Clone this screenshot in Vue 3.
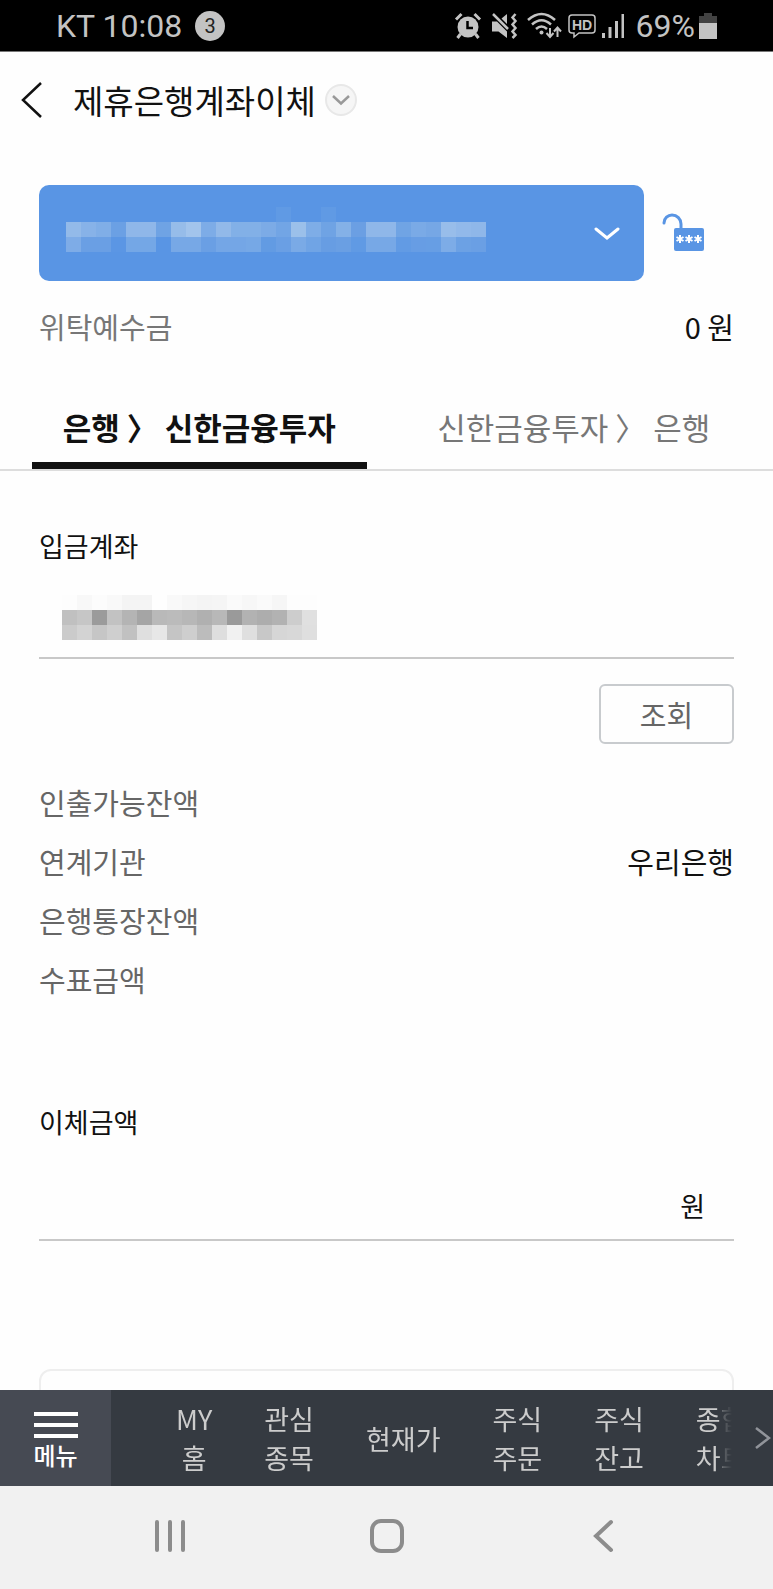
<template>
<div class="screen">
  <div class="status">
    <span class="status-text">KT 10:08</span>
    <span class="badge">3</span>
    <div class="status-icons">
      <svg width="28" height="28" viewBox="0 0 28 28" fill="none" stroke="#c3c3c3">
        <circle cx="14" cy="15" r="10.5" fill="#c3c3c3" stroke="none" />
        <path d="M2 7.500L7.500 2M26 7.500L20.500 2" stroke-width="3" />
        <path d="M6.500 22L3.500 26M21.500 22L24.500 26" stroke-width="3" />
        <path d="M13.500 9V16H19" stroke="#000" stroke-width="2.500" />
      </svg>
      <svg class="mute" width="27" height="28" viewBox="0 0 27 28">
        <path d="M1 9.500H6L16 19.500V26L7.500 19.500H1ZM16 2V12L10.500 6.500Z" fill="#c3c3c3" />
        <path d="M2 2L17 17" stroke="#c3c3c3" stroke-width="2.500" />
        <path d="M24.500 2L21.500 5.500L24.500 9L21.500 12.500L24.500 16L21.500 19.500L24.500 23L21.500 26" fill="none" stroke="#c3c3c3" stroke-width="2.500" />
      </svg>
      <svg class="wifi" width="35" height="28" viewBox="0 0 35 28" fill="none" stroke="#c3c3c3" stroke-width="2.500">
        <path d="M1 8Q14.500 -4 28 8M5 12.500Q14.500 4 24 12.500M9 17Q14.500 12 20 17" />
        <circle cx="14.500" cy="20.500" r="2" fill="#c3c3c3" stroke="none" />
        <path d="M23 16V24M19.500 21L23 25L26.500 21M30.500 25V16M27 19.500L30.500 15.500L34 19.500" stroke-width="2" />
      </svg>
      <svg class="hd" width="28" height="28" viewBox="0 0 28 28">
        <path d="M4 3H24Q27 3 27 6V18Q27 21 24 21H11L6 25V21H4Q1 21 1 18V6Q1 3 4 3Z" fill="none" stroke="#c3c3c3" stroke-width="1.500" />
        <text x="14" y="17.500" text-anchor="middle" fill="#c3c3c3">HD</text>
      </svg>
      <svg class="signal" width="23" height="28" viewBox="0 0 23 28" fill="#c3c3c3">
        <path d="M0 21H3V26H0ZM6.500 15H9.500V26H6.500ZM13 9H16V26H13ZM19.500 2H22V26H19.500Z" />
      </svg>
      <span class="status-text">69%</span>
      <svg class="battery" width="18" height="28" viewBox="0 0 18 28">
        <path d="M5 1H13V4H18V12H0V4H5Z" fill="#424242" />
        <path d="M0 11H18V27H0Z" fill="#c3c3c3" />
      </svg>
    </div>
  </div>

  <header class="header">
    <button class="back" aria-label="뒤로">
      <svg width="22" height="38" viewBox="0 0 22 38" fill="none" stroke="#111" stroke-width="2.500">
        <path d="M20 2L2 19L20 36" />
      </svg>
    </button>
    <h1>제휴은행계좌이체</h1>
    <button class="more" aria-label="메뉴 선택">
      <svg width="18" height="12" viewBox="0 0 18 12" fill="none" stroke="#999" stroke-width="2.500">
        <path d="M1 2L9 9.500L17 2" />
      </svg>
    </button>
  </header>

  <main class="content">
    <div class="account-row">
      <button class="account" aria-label="계좌 선택">
        <span class="mosaic mosaic-account">
          <i v-for="(c, i) in accountCells" :key="i" :style="{ background: c }"></i>
        </span>
        <svg width="26" height="16" viewBox="0 0 26 16" fill="none" stroke="#fff" stroke-width="3" stroke-linecap="round">
          <path d="M2 4L13 13L24 4" />
        </svg>
      </button>
      <button class="lock" aria-label="비밀번호">
        <svg width="42" height="38" viewBox="0 0 42 38">
          <path d="M2 10C2 5 6 2 10 2C15 2 19 6 19 11V17" fill="none" stroke="#5995e4" stroke-width="3" stroke-linecap="round" />
          <rect x="12" y="15" width="30" height="23" rx="2" fill="#5995e4" />
          <path v-for="x in [18, 27, 36]" :key="x" :d="star(x)" stroke="#fff" stroke-width="2" />
        </svg>
      </button>
    </div>

    <div class="row deposit">
      <span>위탁예수금</span>
      <b>0 원</b>
    </div>

    <div class="tabs" role="tablist">
      <button
        v-for="(t, i) in tabs"
        :key="t"
        role="tab"
        :aria-selected="tab === i"
        :class="{ active: tab === i }"
        @click="tab = i"
      >{{ t }}</button>
    </div>

    <section class="form">
      <label class="label" for="in-account">입금계좌</label>
      <button id="in-account" class="field">
        <span class="mosaic mosaic-field">
          <i v-for="(c, i) in fieldCells" :key="i" :style="{ background: c }"></i>
        </span>
      </button>
      <button class="search">조회</button>

      <div class="rows">
        <div v-for="r in rows" :key="r.name" class="row">
          <span>{{ r.name }}</span>
          <b>{{ r.value }}</b>
        </div>
      </div>

      <label class="label amount-label" for="amount">이체금액</label>
      <div class="field amount">
        <input id="amount" v-model="amount" type="text" inputmode="numeric">
        <span>원</span>
      </div>
      <div class="notice"></div>
    </section>
  </main>

  <nav class="bar">
    <button class="menu">
      <svg width="44" height="28" viewBox="0 0 44 28" fill="#fff">
        <path d="M0 1H44V5H0ZM0 12H44V16H0ZM0 23H44V27H0Z" />
      </svg>
      메뉴
    </button>
    <div class="links">
      <a v-for="l in links" :key="l.join('')" href="#">
        <span v-for="s in l" :key="s">{{ s }}</span>
      </a>
    </div>
    <button class="next" aria-label="다음">
      <svg width="16" height="24" viewBox="0 0 16 24" fill="none" stroke="#91949a" stroke-width="2.500">
        <path d="M1 2L14 12L1 22" />
      </svg>
    </button>
  </nav>

  <div class="system">
    <button aria-label="최근 앱">
      <svg width="34" height="36" viewBox="0 0 34 36" stroke="#8c8c8c" stroke-width="4" stroke-linecap="round">
        <path d="M4 4V32M17 4V32M30 4V32" />
      </svg>
    </button>
    <button aria-label="홈">
      <svg width="36" height="36" viewBox="0 0 36 36" fill="none" stroke="#8c8c8c" stroke-width="4">
        <rect x="3" y="3" width="30" height="30" rx="9" />
      </svg>
    </button>
    <button aria-label="뒤로 가기">
      <svg width="34" height="36" viewBox="0 0 34 36" fill="none" stroke="#8c8c8c" stroke-width="4" stroke-linecap="round">
        <path d="M24 4L9 18L24 32" />
      </svg>
    </button>
  </div>
</div>
</template>

<script setup>
import { ref } from 'vue'

const tabs = ['은행 〉 신한금융투자', '신한금융투자 〉 은행']
const tab = ref(0)
const amount = ref('')

const rows = [
  { name: '인출가능잔액', value: '' },
  { name: '연계기관', value: '우리은행' },
  { name: '은행통장잔액', value: '' },
  { name: '수표금액', value: '' }
]

const links = [
  ['MY', '홈'],
  ['관심', '종목'],
  ['현재가'],
  ['주식', '주문'],
  ['주식', '잔고'],
  ['종합', '차트']
]

// 계좌번호 가림 처리, 한 줄에 28칸
const accountCells = [
  '5995e4 5995e4 5995e4 5995e4 5995e4 5995e4 5995e4 5995e4 5995e4 5995e4 5995e4 5995e4 5995e4 5995e4 609ae4 5995e4 5995e4 609ae4 5995e4 5995e4 5995e4 5995e4 5995e4 5995e4 5995e4 5995e4 5995e4 5995e4',
  '93bae9 87b2e8 80aee7 6ba0e4 8fb7e9 8fb7e9 6fa3e4 96bce9 a2c4ec 7dace7 92b9e9 82b0e7 82b0e7 7cabe6 72a5e5 9bc0ea 7eade7 6fa3e4 84b1e7 6b9fe3 8fb7e9 8fb7e9 70a4e4 7aaae6 76a7e5 98bdea 92b9ea 8fb7e9',
  '7eace7 6a9fe4 6a9fe4 5b96e4 74a7e6 74a7e6 5995e4 77a8e6 77a8e6 6a9fe4 74a6e6 74a6e6 76a8e6 629be3 6a9fe4 7aaae6 70a4e5 679de3 6a9fe3 609ae4 77a8e6 77a8e6 629be4 679de4 679ee4 7dace7 6ca1e4 6a9fe4'
].join(' ').split(' ').map(c => '#' + c)

// 입금계좌 가림 처리, 한 줄에 17칸
const fieldCells = [
  'fd f8 fc f9 f4 f4 fe f9 f6 f4 f5 fa f7 fa f6 fd fd',
  'c0 c6 9b c2 b4 a5 b9 bb b7 b0 b8 9a b2 ad b2 cd e0',
  'cb d3 c6 cf c1 df e7 c5 ce bc de f1 df c8 d6 d8 df'
].join(' ').split(' ').map(c => '#' + c + c + c)

function star(x) {
  return `M${x} 22V30M${x - 3.5} 24L${x + 3.5} 28M${x + 3.5} 24L${x - 3.5} 28`
}
</script>

<style>
  body {
    margin: 0;
    background: #fefefe;
  }
</style>

<style scoped>
  * {
    box-sizing: border-box;
  }

  .screen {
    display: flex;
    flex-direction: column;
    height: 100vh;
    font-family: "Noto Sans CJK KR", sans-serif;
    color: #111;
  }

  button {
    padding: 0;
    border: 0;
    background: none;
    color: inherit;
    font: inherit;
  }

  svg {
    display: block;
    flex: none;
  }

  .status {
    flex: none;
    display: flex;
    align-items: center;
    height: 52px;
    padding: 0 56px;
    border-bottom: 1px solid #777;
    background: #000;
    color: #c3c3c3;
  }

  .status-text {
    font: 32px/38px Roboto, sans-serif;
  }

  .badge {
    width: 30px;
    height: 30px;
    margin-left: 13px;
    border-radius: 50%;
    background: #c3c3c3;
    color: #222;
    font: 20px/30px Roboto, sans-serif;
    text-align: center;
  }

  .status-icons {
    display: flex;
    align-items: center;
    margin-left: auto;
  }

  .mute,
  .wifi {
    margin-left: 9px;
  }

  .hd,
  .signal {
    margin-left: 6px;
  }

  .hd text {
    font: 700 14px "Liberation Sans", sans-serif;
  }

  .signal {
    margin-right: 11px;
  }

  .battery {
    margin-left: 4px;
  }

  .header {
    flex: none;
    display: flex;
    align-items: center;
    height: 96px;
    padding: 0 21px;
  }

  .header h1 {
    margin: 0 9px 0 30px;
    font-size: 33px;
    font-weight: 400;
    line-height: 48px;
  }

  .more {
    display: flex;
    align-items: center;
    justify-content: center;
    width: 32px;
    height: 32px;
    border: 2px solid #e8e8e8;
    border-radius: 50%;
    background: #f6f6f6;
  }

  .content {
    flex: 1;
    min-height: 0;
    overflow-y: auto;
    scrollbar-width: none;
  }

  .account-row {
    display: flex;
    align-items: center;
    gap: 18px;
    padding: 37px 69px 0 39px;
  }

  .account {
    flex: 1;
    display: flex;
    align-items: center;
    justify-content: space-between;
    height: 96px;
    padding: 0 24px 0 27px;
    border-radius: 10px;
    background: #5995e4;
  }

  .lock {
    padding-bottom: 3px;
  }

  .mosaic {
    display: grid;
    grid-auto-rows: 15px;
  }

  .mosaic-account {
    grid-template-columns: repeat(28, 15px);
    padding-bottom: 8px;
  }

  .mosaic-field {
    grid-template-columns: repeat(17, 15px);
  }

  .row {
    display: flex;
    align-items: center;
    justify-content: space-between;
    height: 59px;
    color: #666;
    font-size: 29px;
    line-height: 40px;
  }

  .row b {
    color: #111;
    font-weight: 400;
  }

  .deposit {
    margin: 15px 39px 28px;
    color: #777;
  }

  .tabs {
    display: grid;
    grid-template-columns: 1fr 1fr;
    gap: 40px;
    padding: 0 32px;
    border-bottom: 2px solid #ddd;
  }

  .tabs button {
    height: 86px;
    padding-top: 2px;
    color: #777;
    font-size: 31px;
    line-height: 40px;
    white-space: nowrap;
  }

  .tabs button.active {
    box-shadow: inset 0 -7px #111;
    color: #111;
    font-weight: 700;
  }

  .form {
    display: flex;
    flex-direction: column;
    padding: 54px 39px 40px;
  }

  .label {
    font-size: 27px;
    line-height: 42px;
  }

  .field {
    display: flex;
    height: 92px;
    padding: 28px 29px 0 23px;
    border-bottom: 2px solid #c8c8c8;
  }

  .search {
    align-self: flex-end;
    width: 135px;
    height: 60px;
    margin-top: 25px;
    border: 2px solid #c8cbce;
    border-radius: 6px;
    color: #666;
    font-size: 29px;
    line-height: 40px;
  }

  .rows {
    margin-top: 28px;
  }

  .amount-label {
    margin-top: 93px;
  }

  .amount {
    align-items: center;
    height: 98px;
    padding-top: 30px;
    font-size: 27px;
    line-height: 40px;
  }

  .amount input {
    flex: 1;
    min-width: 0;
    padding: 0;
    border: 0;
    outline: 0;
    background: none;
    font: inherit;
    text-align: right;
  }

  .notice {
    height: 120px;
    margin-top: 128px;
    border: 2px solid #eee;
    border-radius: 12px;
  }

  .bar {
    flex: none;
    display: flex;
    height: 96px;
    background: #353a41;
    color: #ccc;
  }

  .menu {
    flex: none;
    display: flex;
    flex-direction: column;
    align-items: center;
    width: 111px;
    padding-top: 21px;
    background: #464a53;
    color: #fff;
    font-size: 24px;
    font-weight: 500;
    line-height: 32px;
  }

  .links {
    flex: 1;
    display: flex;
    gap: 52px;
    min-width: 0;
    padding-left: 65px;
    overflow: hidden;
    mask-image: linear-gradient(to left, transparent, rgba(0, 0, 0, 0.3) 9px, #000 12px);
  }

  .links a {
    flex: none;
    display: flex;
    flex-direction: column;
    align-items: center;
    justify-content: center;
    color: inherit;
    font-size: 27px;
    line-height: 39px;
    text-decoration: none;
  }

  .next {
    display: flex;
    align-items: center;
    justify-content: flex-end;
    width: 41px;
    padding-right: 2px;
  }

  .system {
    flex: none;
    display: flex;
    align-items: center;
    justify-content: center;
    gap: 182px;
    height: 103px;
    padding-bottom: 3px;
    background: #f1f1f1;
  }
</style>
